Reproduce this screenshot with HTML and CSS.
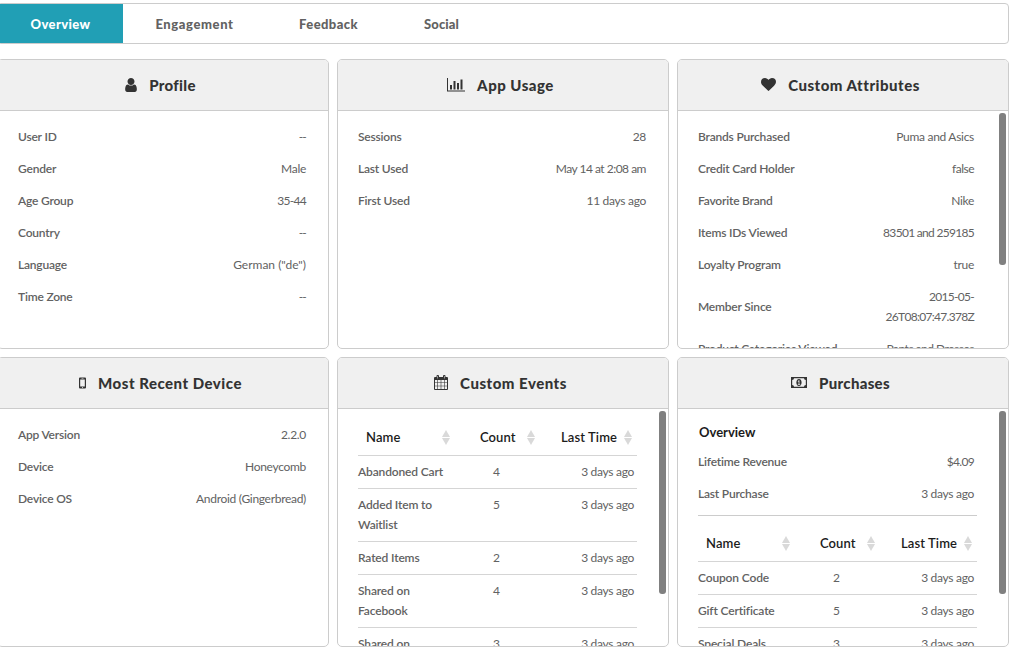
FILE: index.html
```
<!DOCTYPE html>
<html lang="en">
<head>
<meta charset="utf-8">
<title>Customer profile</title>
<link rel="stylesheet" href="styles.css">
</head>
<body>
<nav class="tabs">
  <a class="tab tab-active">Overview</a>
  <a class="tab tab-wide">Engagement</a>
  <a class="tab">Feedback</a>
  <a class="tab tab-narrow">Social</a>
</nav>
<main class="grid">
  <section class="card">
    <h2 class="head head-snug"><svg class="icon" width="12" height="14" viewBox="0 0 1280 1536"><path transform="matrix(1 0 0 -1 0 1408)" d="M1280 137q0 -109 -62.5 -187t-150.5 -78h-854q-88 0 -150.5 78t-62.5 187q0 85 8.5 160.5t31.5 152t58.5 131t94 89t134.5 34.5q131 -128 313 -128t313 128q76 0 134.5 -34.5t94 -89t58.5 -131t31.5 -152t8.5 -160.5zM1024 1024q0 -159 -112.5 -271.5t-271.5 -112.5t-271.5 112.5t-112.5 271.5t112.5 271.5t271.5 112.5t271.5 -112.5t112.5 -271.5z"/></svg><span>Profile</span></h2>
    <div class="body">
      <div class="row"><b>User ID</b><span class="dashes">--</span></div>
      <div class="row"><b>Gender</b><span>Male</span></div>
      <div class="row"><b>Age Group</b><span class="num">35-44</span></div>
      <div class="row"><b>Country</b><span class="dashes">--</span></div>
      <div class="row"><b>Language</b><span class="loose">German ("de")</span></div>
      <div class="row"><b>Time Zone</b><span class="dashes">--</span></div>
    </div>
  </section>
  <section class="card">
    <h2 class="head"><svg class="icon" width="18" height="14" viewBox="0 0 18 14"><path d="M0 0h1v12.500h17v1H0zM3 7h2v4.500H3zM6.500 3h2v8.500h-2zM10 5h2v6.500h-2zM13.500 1.500h2v10h-2z"/></svg><span>App Usage</span></h2>
    <div class="body">
      <div class="row"><b>Sessions</b><span>28</span></div>
      <div class="row"><b>Last Used</b><span class="mixed">May 14 at 2:08 am</span></div>
      <div class="row"><b>First Used</b><span>11 days ago</span></div>
    </div>
  </section>
  <section class="card">
    <h2 class="head"><svg class="icon" width="15" height="13" viewBox="0 0 1792 1536"><path transform="matrix(1 0 0 -1 0 1408)" d="M896 -128q-26 0 -44 18l-624 602q-10 8 -27.5 26t-55.5 65.5t-68 97.5t-53.5 121t-23.5 138q0 220 127 344t351 124q62 0 126.5 -21.5t120 -58t95.5 -68.500t76 -68q36 36 76 68t95.500 68.500t120 58t126.500 21.500q224 0 351 -124t127 -344q0 -221 -229 -450l-623 -600q-18 -18 -44 -18z"/></svg><span>Custom Attributes</span></h2>
    <div class="body body-scroll">
      <div class="row"><b>Brands Purchased</b><span>Puma and Asics</span></div>
      <div class="row"><b>Credit Card Holder</b><span class="mixed">false</span></div>
      <div class="row"><b>Favorite Brand</b><span>Nike</span></div>
      <div class="row"><b>Items IDs Viewed</b><span class="num">83501 and 259185</span></div>
      <div class="row"><b>Loyalty Program</b><span>true</span></div>
      <div class="row"><b>Member Since</b><span class="num">2015-05-<br>26T08:07:47.378Z</span></div>
      <div class="row"><b>Product Categories Viewed</b><span class="mixed">Pants and Dresses</span></div>
    </div>
    <i class="thumb thumb-short"></i>
  </section>
  <section class="card">
    <h2 class="head"><svg class="icon" width="7" height="12" viewBox="0 0 7 12"><path fill-rule="evenodd" d="M1 .5h5q1 0 1 1v9q0 1-1 1H1q-1 0-1-1v-9q0-1 1-1zM1.200 2.500v7h4.600v-7zM2.500 1.200v.5h2v-.5zM3 10.200v.7h1v-.7z"/></svg><span>Most Recent Device</span></h2>
    <div class="body">
      <div class="row"><b>App Version</b><span>2.2.0</span></div>
      <div class="row"><b>Device</b><span>Honeycomb</span></div>
      <div class="row"><b>Device OS</b><span>Android (Gingerbread)</span></div>
    </div>
  </section>
  <section class="card">
    <h2 class="head"><svg class="icon" width="14" height="15" viewBox="0 0 14 15"><path fill-rule="evenodd" d="M1 2h1.500V1q0-1 1-1h.5q1 0 1 1v1h4V1q0-1 1-1h.5q1 0 1 1v1H13q1 0 1 1v11q0 1-1 1H1q-1 0-1-1V3q0-1 1-1zM1 5v2.500h2.400V5zM4 5v2.500h2.700V5zM7.300 5v2.500H10V5zM10.600 5v2.500H13V5zM1 8.100v2.600h2.400V8.100zM4 8.100v2.600h2.700V8.100zM7.300 8.100v2.600H10V8.100zM10.600 8.100v2.600H13V8.100zM1 11.300V14h2.400v-2.700zM4 11.300V14h2.700v-2.700zM7.300 11.300V14H10v-2.700zM10.600 11.300V14H13v-2.700zM3.500 1v2.500H4V1zM10 1v2.500h.5V1z"/></svg><span>Custom Events</span></h2>
    <div class="body body-scroll">
      <table class="table">
        <tr><th class="c-name"><div>Name<i class="sort"></i></div></th><th class="c-count"><div>Count<i class="sort"></i></div></th><th class="c-time"><div>Last Time<i class="sort"></i></div></th></tr>
        <tr><td>Abandoned Cart</td><td>4</td><td>3 days ago</td></tr>
        <tr><td>Added Item to<br>Waitlist</td><td>5</td><td>3 days ago</td></tr>
        <tr><td>Rated Items</td><td>2</td><td>3 days ago</td></tr>
        <tr><td>Shared on<br>Facebook</td><td>4</td><td>3 days ago</td></tr>
        <tr><td>Shared on</td><td>3</td><td>3 days ago</td></tr>
      </table>
    </div>
    <i class="thumb"></i>
  </section>
  <section class="card">
    <h2 class="head head-snug"><svg class="icon" width="16" height="11" viewBox="0 0 16 11"><path fill-rule="evenodd" d="M0 0h16v11H0zM3 1.200Q3 3 1.200 3v5Q3 8 3 9.800h10Q13 8 14.800 8V3Q13 3 13 1.200z"/><path fill-rule="evenodd" d="M8 2c3.500 0 3.500 7 0 7s-3.500-7 0-7zM6.700 4.200l.4.600.5-.3V7h-.8v.7h2.400V7h-.8V3.300h-.6z"/></svg><span>Purchases</span></h2>
    <div class="body body-scroll">
      <h3 class="sub">Overview</h3>
      <div class="row"><b>Lifetime Revenue</b><span class="num">$4.09</span></div>
      <div class="row"><b>Last Purchase</b><span>3 days ago</span></div>
      <div class="table-wrap">
        <table class="table">
          <tr><th class="c-name"><div>Name<i class="sort"></i></div></th><th class="c-count"><div>Count<i class="sort"></i></div></th><th class="c-time"><div>Last Time<i class="sort"></i></div></th></tr>
          <tr><td>Coupon Code</td><td>2</td><td>3 days ago</td></tr>
          <tr><td>Gift Certificate</td><td>5</td><td>3 days ago</td></tr>
          <tr><td>Special Deals</td><td>3</td><td>3 days ago</td></tr>
        </table>
      </div>
    </div>
    <i class="thumb"></i>
  </section>
</main>
</body>
</html>
```
FILE: styles.css
```
* { box-sizing: border-box; }
html { overflow: hidden; }
body {
  margin: 0 0 0 -3px;
  width: 1012px;
  height: 647px;
  overflow: hidden;
  padding-top: 3px;
  background: #fff;
  color: #626262;
  font: 12px/20px Lato, "Open Sans", sans-serif;
}
.tabs {
  display: flex;
  height: 41px;
  border: 1px solid #ccc;
  border-radius: 4px;
  overflow: hidden;
}
.tab {
  width: 125px;
  padding-top: 1px;
  font-size: 13px;
  font-weight: 900;
  letter-spacing: .4px;
  line-height: 39px;
  text-align: center;
}
.tab-active { background: #219fb5; color: #fff; }
.tab-wide { width: 143px; letter-spacing: .6px; }
.tab-narrow { width: 101px; letter-spacing: .1px; }
.grid {
  display: grid;
  grid-template-columns: repeat(3, 332px);
  grid-auto-rows: 290px;
  gap: 8px;
  margin-top: 15px;
}
.card {
  position: relative;
  border: 1px solid #ccc;
  border-radius: 5px;
  overflow: hidden;
}
.head {
  display: flex;
  align-items: center;
  justify-content: center;
  gap: 12px;
  height: 51px;
  margin: 0;
  padding: 0 5px 1px 0;
  border-bottom: 1px solid #ccc;
  background: #f0f0f0;
  color: #333;
  font-size: 15px;
  font-weight: 900;
  letter-spacing: .5px;
}
.head-snug { letter-spacing: .3px; }
.icon { fill: #333; flex: none; }
.body { padding: 10px 22px 0 20px; }
.body-scroll { padding-right: 31px; }
.row {
  display: flex;
  justify-content: space-between;
  align-items: center;
  padding: 6px 0;
}
.row b {
  font-weight: 600;
  letter-spacing: -.2px;
  white-space: nowrap;
}
.row span { text-align: right; letter-spacing: -.3px; }
.row .mixed { letter-spacing: -.5px; }
.row .num { letter-spacing: -.7px; }
.row .loose { letter-spacing: 0; }
.row .dashes { letter-spacing: -.8px; }
.body-scroll .row { padding-right: 3px; }
.sub {
  margin: 0;
  padding: 3px 1px 4px;
  color: #1c1c1c;
  font-size: 13px;
  font-weight: 700;
}
.table-wrap {
  margin-top: 5px;
  padding-top: 9px;
  border-top: 1px solid #ccc;
}
.table {
  width: 279px;
  table-layout: fixed;
  border-spacing: 0;
}
.c-name { width: 97px; }
.c-count { width: 85px; }
.table th {
  padding: 0 5px 0 8px;
  height: 37px;
  border-bottom: 1px solid #d5d5d5;
  color: #1c1c1c;
  font-size: 13px;
  font-weight: 600;
  letter-spacing: .1px;
}
.table th div {
  display: flex;
  align-items: center;
  justify-content: space-between;
}
.table .c-count { padding-left: 25px; }
.table .c-time { padding-left: 21px; }
.sort { display: grid; gap: 1px; }
.sort::before, .sort::after {
  content: "";
  border: 4px solid transparent;
}
.sort::before { border-top: 0; border-bottom: 7px solid #d9d9d9; }
.sort::after { border-bottom: 0; border-top: 7px solid #d9d9d9; }
.table td {
  padding: 6px 0;
  border-bottom: 1px solid #d5d5d5;
  vertical-align: top;
  white-space: nowrap;
}
.table td:nth-child(1) { font-weight: 600; letter-spacing: -.15px; }
.table td:nth-child(2) { text-align: center; padding-right: 2px; }
.table td:nth-child(3) { text-align: right; padding-right: 3px; letter-spacing: -.3px; }
.thumb {
  position: absolute;
  top: 53px;
  right: 2px;
  width: 7px;
  height: 183px;
  border-radius: 3px;
  background: #808080;
}
.thumb-short { height: 152px; }
```
